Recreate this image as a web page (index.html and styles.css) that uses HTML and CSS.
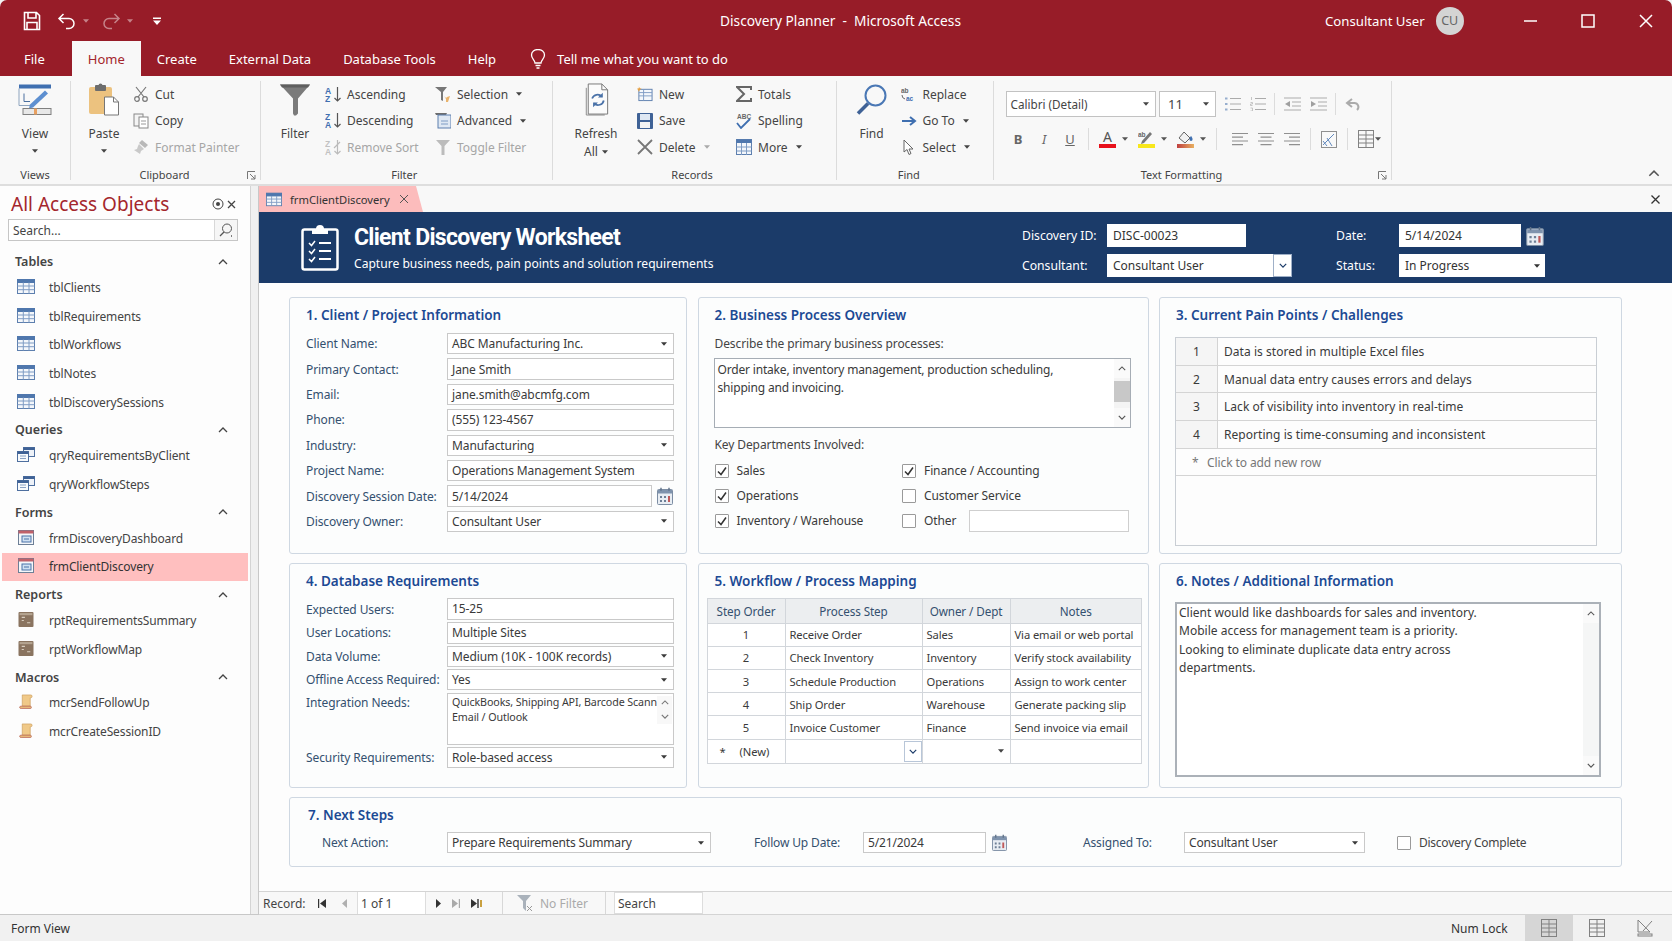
FILE: index.html
```html
<!DOCTYPE html>
<html lang="en">

<head>
	<meta charset="UTF-8">
	<title>Discovery Planner - Microsoft Access</title>
	<meta name="viewport" content="width=device-width">
	<link rel="stylesheet" href="styles.css">
</head>

<body>
	<svg class="sprite" width="0" height="0">
		<symbol id="i-table" viewBox="0 0 18 15">
			<rect x=".5" y=".5" width="17" height="14" fill="#f4f7fb" stroke="#5d7fae" />
			<rect x=".5" y=".5" width="17" height="3" fill="#4f77ad" stroke="#4f77ad" />
			<path d="M6.300 3.500v11M12 3.500v11M.5 7h17M.5 10.700h17" stroke="#7f9cc4" fill="none" />
		</symbol>
		<symbol id="i-query" viewBox="0 0 18 15">
			<rect x="6.500" y=".5" width="11" height="9" fill="#eef2f8" stroke="#4e6f9f" />
			<rect x="6.500" y=".5" width="11" height="2.500" fill="#3f6296" />
			<rect x=".5" y="4.500" width="11" height="10" fill="#f8fafc" stroke="#4e6f9f" />
			<rect x=".5" y="4.500" width="11" height="2.500" fill="#3f6296" />
			<path d="M3 9h6M3 11.500h6" stroke="#8aa2c4" />
		</symbol>
		<symbol id="i-form" viewBox="0 0 16 15">
			<rect x=".5" y=".5" width="15" height="14" fill="#f5f7fa" stroke="#6d7f96" />
			<rect x=".5" y=".5" width="15" height="3" fill="#c0616a" />
			<rect x="4" y="6" width="9" height="6" fill="#cfe0f2" stroke="#4b73a8" />
			<path d="M6 9h5" stroke="#4b73a8" />
		</symbol>
		<symbol id="i-report" viewBox="0 0 14 14">
			<rect width="14" height="14" rx="1" fill="#8a7460" />
			<rect x="1" y="1" width="12" height="2" fill="#b5a491" />
			<path d="M3 5h3M3 8h2M8 10h3" stroke="#d8cdbf" />
		</symbol>
		<symbol id="i-macro" viewBox="0 0 14 16">
			<path d="M3 1h9a1.500 1.500 0 0 1 0 3h-.5v9H3z" fill="#f0c988" stroke="#c99a58" stroke-width=".7" />
			<path d="M1 13h10.500a1.200 1.200 0 0 1 0 2.500H2.500A1.300 1.300 0 0 1 1 13z" fill="#e8b878" stroke="#b0554a" stroke-width=".7" />
		</symbol>
		<symbol id="i-cal" viewBox="0 0 16 18">
			<rect x=".5" y="2.500" width="15" height="15" rx="1" fill="#e8edf3" stroke="#7c8da3" />
			<rect x="1" y="3" width="14" height="3.500" fill="#7f93ad" />
			<path d="M4 .8v3M12 .8v3" stroke="#5f7188" stroke-width="1.400" />
			<path d="M3 9h2v2H3zM7 9h2v2H7zM3 13h2v2H3zM7 13h2v2H7z" fill="#6d7f96" />
			<path d="M11 9h2v6h-2z" fill="#c05a5a" />
		</symbol>
		<symbol id="i-caret" viewBox="0 0 7 4">
			<path d="M0 0h7L3.500 4z" fill="currentColor" />
		</symbol>
		<symbol id="i-chev-up" viewBox="0 0 10 6">
			<path d="M1 5l4-4 4 4" fill="none" stroke="currentColor" stroke-width="1.300" />
		</symbol>
		<symbol id="i-chev-down" viewBox="0 0 10 6">
			<path d="M1 1l4 4 4-4" fill="none" stroke="currentColor" stroke-width="1.500" />
		</symbol>
		<symbol id="i-check" viewBox="0 0 12 12">
			<path d="M2 6.500l3 3 5-7" fill="none" stroke="#333" stroke-width="1.500" />
		</symbol>
		<symbol id="i-bullets" viewBox="0 0 16 14">
			<path d="M5 1.500h11M5 7h11M5 12.500h11" stroke="#999" stroke-width="1.200" />
			<path d="M0 .5h2.500v2H0zM0 6h2.500v2H0zM0 11.500h2.500v2H0z" fill="#7f9cc4" />
		</symbol>
		<symbol id="i-numbers" viewBox="0 0 16 14">
			<path d="M5 1.500h11M5 7h11M5 12.500h11" stroke="#999" stroke-width="1.200" />
			<path d="M1.500 0v3M.5 5.500h2v1.500h-2v1.500h2M.5 11h2v3h-2" fill="none" stroke="#aaa" stroke-width=".8" />
		</symbol>
		<symbol id="i-outdent" viewBox="0 0 17 14">
			<path d="M0 1h17M8 5h9M8 9h9M0 13h17" stroke="#999" stroke-width="1.200" />
			<path d="M6 4v6L1 7z" fill="#8a8a8a" />
		</symbol>
		<symbol id="i-indent" viewBox="0 0 17 14">
			<path d="M0 1h17M8 5h9M8 9h9M0 13h17" stroke="#999" stroke-width="1.200" />
			<path d="M1 4v6l5-3z" fill="#8a8a8a" />
		</symbol>
		<symbol id="i-al" viewBox="0 0 16 14">
			<path d="M0 1.500h16M0 5.200h11M0 9h16M0 12.700h11" stroke="#777" stroke-width="1.200" />
		</symbol>
		<symbol id="i-ac" viewBox="0 0 16 14">
			<path d="M0 1.500h16M2.500 5.200h11M0 9h16M2.500 12.700h11" stroke="#777" stroke-width="1.200" />
		</symbol>
		<symbol id="i-ar" viewBox="0 0 16 14">
			<path d="M0 1.500h16M5 5.200h11M0 9h16M5 12.700h11" stroke="#777" stroke-width="1.200" />
		</symbol>
		<symbol id="i-grid" viewBox="0 0 16 18">
			<rect x=".5" y=".5" width="15" height="17" fill="none" stroke="#666" />
			<path d="M.5 5h15M.5 9h15M.5 13h15M8 .5v17" stroke="#666" />
		</symbol>
	</svg>

	<div class="app">
		<header class="titlebar">
			<div class="qat">
				<svg class="qat-save" width="20" height="20" viewBox="0 0 20 20">
					<path d="M2.500 1.500h12l3 3v14h-15z M6 1.500v5.500h8V1.500 M5 18.500v-7h10v7" fill="none" stroke="#fff" stroke-width="1.600" />
				</svg>
				<svg class="qat-undo" width="20" height="18" viewBox="0 0 20 18">
					<path d="M6.500 2L2 6.500 6.500 11M2.500 6.500H12a5 5 0 0 1 0 10H9" fill="none" stroke="#fff" stroke-width="1.500" />
				</svg>
				<svg class="qat-caret dim" width="6" height="4"><use href="#i-caret" /></svg>
				<svg class="qat-redo dim" width="20" height="18" viewBox="0 0 20 18">
					<path d="M13.500 2L18 6.500 13.500 11M17.500 6.500H8a5 5 0 0 0 0 10h3" fill="none" stroke="#fff" stroke-width="1.500" />
				</svg>
				<svg class="qat-caret dim" width="6" height="4"><use href="#i-caret" /></svg>
				<svg class="qat-more" width="8" height="8" viewBox="0 0 8 8">
					<path d="M0 .5h8v1.500H0zM0 3.500h8L4 8z" fill="#fff" />
				</svg>
			</div>
			<div class="doc-title">Discovery Planner&nbsp; - &nbsp;Microsoft Access</div>
			<div class="account">
				<span>Consultant User</span>
				<span class="avatar">CU</span>
				<svg class="win-btn win-min" width="14" height="14" viewBox="0 0 14 14"><path d="M0 7h13" stroke="#fff" stroke-width="1.500" /></svg>
				<svg class="win-btn win-max" width="14" height="14" viewBox="0 0 14 14"><rect x="1" y="1" width="12" height="12" fill="none" stroke="#fff" stroke-width="1.500" /></svg>
				<svg class="win-btn win-close" width="14" height="14" viewBox="0 0 14 14"><path d="M1 1l12 12M13 1L1 13" stroke="#fff" stroke-width="1.500" /></svg>
			</div>
		</header>

		<nav class="tabs">
			<span class="tab tab-file">File</span>
			<span class="tab active">Home</span>
			<span class="tab">Create</span>
			<span class="tab">External Data</span>
			<span class="tab">Database Tools</span>
			<span class="tab">Help</span>
			<svg class="bulb" width="16" height="20" viewBox="0 0 16 20">
				<path d="M5 14c0-3-3.500-4-3.500-8a6.500 5.500 0 0 1 13 0c0 4-3.500 5-3.500 8zM5.500 16.500h5M6.500 19h3" fill="none" stroke="#fff" stroke-width="1.300" />
			</svg>
			<span class="tell">Tell me what you want to do</span>
		</nav>

		<section class="ribbon">
			<div class="group g-views">
				<div class="group-body">
					<div class="big big-view">
						<svg width="34" height="32" viewBox="0 0 34 32">
							<rect x="1" y="1" width="32" height="4" fill="#3f6fb0" />
							<path d="M1 5v17h12" fill="none" stroke="#8fa5bf" />
							<path d="M6 10v8h6" fill="none" stroke="#4a6f9f" />
							<path d="M12 21L27 7l3 3-15 14-4 1z" fill="#5d8fd0" />
							<rect x="5" y="25" width="28" height="6" fill="#e8e8e8" stroke="#808080" />
							<rect x="16" y="25" width="3" height="6" fill="#e8a060" />
						</svg>
						<span>View</span>
						<svg class="caret" width="6" height="4"><use href="#i-caret" /></svg>
					</div>
				</div>
				<div class="group-label">Views</div>
			</div>

			<div class="group g-clip">
				<div class="group-body">
					<div class="big big-paste">
						<svg width="32" height="33" viewBox="0 0 32 33">
							<rect x="1" y="4" width="23" height="27" rx="2" fill="#ecc27f" />
							<rect x="7" y="2" width="11" height="6" rx="1" fill="#6d6d6d" />
							<circle cx="12.500" cy="2.500" r="2" fill="#6d6d6d" />
							<path d="M16.500 14h9l5 5v13h-14z" fill="#fff" stroke="#777" />
							<path d="M25.500 14v5h5" fill="none" stroke="#777" />
						</svg>
						<span>Paste</span>
						<svg class="caret" width="6" height="4"><use href="#i-caret" /></svg>
					</div>
					<div class="small-col col-clip">
						<div class="small">
							<svg class="ic" width="16" height="16" viewBox="0 0 16 16"><path d="M3 1l8 10M13 1L5 11" stroke="#777" stroke-width="1.200" /><circle cx="4" cy="13" r="2.300" fill="none" stroke="#777" stroke-width="1.200" /><circle cx="12" cy="13" r="2.300" fill="none" stroke="#777" stroke-width="1.200" /></svg>
							<span>Cut</span>
						</div>
						<div class="small">
							<svg class="ic" width="16" height="16" viewBox="0 0 16 16"><rect x="1" y="1" width="9" height="12" fill="#f4f4f4" stroke="#888" /><rect x="6" y="4" width="9" height="11" fill="#fff" stroke="#888" /><path d="M8 8h5M8 11h5" stroke="#999" /></svg>
							<span>Copy</span>
						</div>
						<div class="small off">
							<svg class="ic" width="16" height="16" viewBox="0 0 16 16"><path d="M9 1l6 5-3 3-6-5z" fill="#b8b8b8" /><path d="M6 5l5 5-3 2-1 3-6-4 3-1 1-3z" fill="#c9c9c9" /></svg>
							<span>Format Painter</span>
						</div>
					</div>
				</div>
				<div class="group-label">Clipboard</div>
				<svg class="launcher" width="9" height="9" viewBox="0 0 9 9"><path d="M.5 8V.5H8M3 3l5 5M8 4v4H4" fill="none" stroke="#777" /></svg>
			</div>

			<div class="group g-filter">
				<div class="group-body">
					<div class="big big-filter">
						<svg width="30" height="32" viewBox="0 0 30 32"><path d="M0 1h30L18 15v15l-2 2h-2l-1-2V15z" fill="#7b7b7b" /><path d="M0 1h30l-2 3H2z" fill="#5e5e5e" /></svg>
						<span>Filter</span>
					</div>
					<div class="small-col col-filter1">
						<div class="small">
							<svg class="ic" width="16" height="17" viewBox="0 0 16 17"><text x="0" y="7.500" class="az az-b">A</text><text x="0" y="16" class="az az-b">Z</text><path d="M12.500 1v14M9.500 12l3 3 3-3" fill="none" stroke="#555" stroke-width="1.200" /></svg>
							<span>Ascending</span>
						</div>
						<div class="small">
							<svg class="ic" width="16" height="17" viewBox="0 0 16 17"><text x="0" y="7.500" class="az az-b">Z</text><text x="0" y="16" class="az az-b">A</text><path d="M12.500 1v14M9.500 12l3 3 3-3" fill="none" stroke="#555" stroke-width="1.200" /></svg>
							<span>Descending</span>
						</div>
						<div class="small off">
							<svg class="ic" width="16" height="17" viewBox="0 0 16 17"><text x="0" y="7.500" class="az az-g">Z</text><text x="0" y="16" class="az az-g">A</text><path d="M12.500 1v14M9.500 12l3 3 3-3M9 9l6-6" fill="none" stroke="#bbb" stroke-width="1.200" /></svg>
							<span>Remove Sort</span>
						</div>
					</div>
					<div class="small-col">
						<div class="small">
							<svg class="ic" width="16" height="17" viewBox="0 0 16 17"><path d="M0 1h12L8 6v9l-2-1V6z" fill="#777" /><path d="M9 10l2 2 1-1 3-1-1 3-1 3h-2v-3z" fill="#e9b36c" /></svg>
							<span>Selection</span>
							<svg class="caret-s" width="6" height="4"><use href="#i-caret" /></svg>
						</div>
						<div class="small">
							<svg class="ic" width="16" height="17" viewBox="0 0 16 17"><path d="M0 1h12l-1 2H1z" fill="#6d6d6d" /><rect x="3" y="3" width="13" height="13" fill="#dfe8f3" stroke="#5d7fae" /><path d="M6 9h7M6 12h7" stroke="#7f9cc4" /></svg>
							<span>Advanced</span>
							<svg class="caret-s" width="6" height="4"><use href="#i-caret" /></svg>
						</div>
						<div class="small off">
							<svg class="ic" width="16" height="17" viewBox="0 0 16 17"><path d="M1 1h14L9.500 7v9h-3V7z" fill="#bcbcbc" /></svg>
							<span>Toggle Filter</span>
						</div>
					</div>
				</div>
				<div class="group-label">Filter</div>
			</div>

			<div class="group g-records">
				<div class="group-body">
					<div class="big big-refresh">
						<svg width="26" height="34" viewBox="0 0 26 34">
							<path d="M3 5v28h19" fill="none" stroke="#8a8a8a" />
							<path d="M5 1h14l6 6v25H5z" fill="#fbfbfb" stroke="#777" />
							<path d="M19 1v6h6" fill="none" stroke="#777" />
							<path d="M9 16a6 6 0 0 1 10-2M21 18a6 6 0 0 1-10 3" fill="none" stroke="#4a72a8" stroke-width="1.800" />
							<path d="M20 10v5h-5zM10 25v-5h5z" fill="#4a72a8" />
						</svg>
						<span>Refresh</span>
						<span class="all">All <svg class="caret-s" width="6" height="4"><use href="#i-caret" /></svg></span>
					</div>
					<div class="small-col col-rec1">
						<div class="small">
							<svg class="ic" width="17" height="16" viewBox="0 0 17 16"><rect x="2" y="3" width="14" height="12" fill="#f4f7fb" stroke="#5d7fae" /><path d="M2 6.500h14M2 10h14M7 3v12" stroke="#7f9cc4" /><path d="M2 0l1 2 2 .5-2 1-1 2-1-2-1-1 2-.5z" fill="#e8a040" /></svg>
							<span>New</span>
						</div>
						<div class="small">
							<svg class="ic" width="16" height="16" viewBox="0 0 16 16"><rect x="0" y="0" width="16" height="16" rx="1" fill="#3f6296" /><rect x="3" y="1" width="10" height="6" fill="#dfe8f3" /><rect x="3" y="9" width="10" height="6" fill="#f4f4f4" /></svg>
							<span>Save</span>
						</div>
						<div class="small">
							<svg class="ic" width="16" height="16" viewBox="0 0 16 16"><path d="M1 1l14 14M15 1L1 15" stroke="#777" stroke-width="1.800" /></svg>
							<span>Delete</span>
							<svg class="caret-s caret-dim" width="6" height="4"><use href="#i-caret" /></svg>
						</div>
					</div>
					<div class="small-col">
						<div class="small">
							<svg class="ic" width="16" height="16" viewBox="0 0 16 16"><path d="M15 4V1H1l7 7-7 7h14v-3" fill="none" stroke="#666" stroke-width="2" /></svg>
							<span>Totals</span>
						</div>
						<div class="small">
							<svg class="ic" width="16" height="16" viewBox="0 0 16 16"><text x="1" y="6" class="az az-s">ABC</text><path d="M1 10l4 5 9-9" fill="none" stroke="#3f6fb0" stroke-width="1.800" /></svg>
							<span>Spelling</span>
						</div>
						<div class="small">
							<svg class="ic" width="16" height="16" viewBox="0 0 16 16"><rect x=".5" y=".5" width="15" height="15" fill="#f4f7fb" stroke="#5d7fae" /><rect x=".5" y=".5" width="15" height="3.500" fill="#4f77ad" /><path d="M.5 8h15M.5 12h15M5.500 4v12M10.500 4v12" stroke="#7f9cc4" /></svg>
							<span>More</span>
							<svg class="caret-s" width="6" height="4"><use href="#i-caret" /></svg>
						</div>
					</div>
				</div>
				<div class="group-label">Records</div>
			</div>

			<div class="group g-find">
				<div class="group-body">
					<div class="big big-find">
						<svg width="32" height="32" viewBox="0 0 32 32"><circle cx="19.500" cy="12" r="10" fill="none" stroke="#4a78b5" stroke-width="2" /><path d="M12 20L2 30" stroke="#3f6296" stroke-width="3.500" /></svg>
						<span>Find</span>
					</div>
					<div class="small-col col-find">
						<div class="small">
							<svg class="ic" width="16" height="16" viewBox="0 0 16 16"><text x="0" y="7" class="az az-s">ab</text><text x="5" y="15" class="az az-s az-blue">ac</text><path d="M1 9a4 4 0 0 0 3 4" fill="none" stroke="#666" /></svg>
							<span>Replace</span>
						</div>
						<div class="small">
							<svg class="ic" width="16" height="16" viewBox="0 0 16 16"><path d="M1 8h12M9 4l5 4-5 4" fill="none" stroke="#3f6fb0" stroke-width="2" /></svg>
							<span>Go To</span>
							<svg class="caret-s" width="6" height="4"><use href="#i-caret" /></svg>
						</div>
						<div class="small">
							<svg class="ic" width="16" height="17" viewBox="0 0 16 17"><path d="M3 1v12l3-2.500 2 5 2-1-2-4.500h4z" fill="#fff" stroke="#666" /></svg>
							<span>Select</span>
							<svg class="caret-s" width="6" height="4"><use href="#i-caret" /></svg>
						</div>
					</div>
				</div>
				<div class="group-label">Find</div>
			</div>

			<div class="group g-text">
				<div class="group-body text-body">
					<div class="text-row text-row1">
						<div class="combo combo-font"><span>Calibri (Detail)</span><svg width="6" height="4"><use href="#i-caret" /></svg></div>
						<div class="combo combo-size"><span>11</span><svg width="6" height="4"><use href="#i-caret" /></svg></div>
						<svg class="tool first" width="16" height="14"><use href="#i-bullets" /></svg>
						<svg class="tool" width="16" height="14"><use href="#i-numbers" /></svg>
						<i class="tool-sep"></i>
						<svg class="tool" width="17" height="14"><use href="#i-outdent" /></svg>
						<svg class="tool" width="17" height="14"><use href="#i-indent" /></svg>
						<i class="tool-sep"></i>
						<svg class="tool" width="16" height="16" viewBox="0 0 16 16"><path d="M7 3L2 7l5 4M3 7h6a4 4 0 0 1 3 7" fill="none" stroke="#999" stroke-width="2" /></svg>
					</div>
					<div class="text-row text-row2">
						<b class="fmt fmt-b">B</b>
						<i class="fmt fmt-i">I</i>
						<u class="fmt fmt-u">U</u>
						<i class="tool-sep"></i>
						<span class="swatch"><span class="swatch-a">A</span><i class="bar bar-red"></i></span>
						<svg class="caret-t" width="6" height="4"><use href="#i-caret" /></svg>
						<span class="swatch">
							<svg width="17" height="13" viewBox="0 0 17 13"><path d="M4 10L12 1l2 2-8 9-3 1z" fill="#777" /><text x="0" y="6" class="az az-s">ab</text></svg>
							<i class="bar bar-yellow"></i>
						</span>
						<svg class="caret-t" width="6" height="4"><use href="#i-caret" /></svg>
						<span class="swatch">
							<svg width="17" height="13" viewBox="0 0 17 13"><path d="M7 1l6 6-5 5-6-5z" fill="#f2f2f2" stroke="#666" /><path d="M14 5c2 2 2 5 0 5s-2-3 0-5z" fill="#3f6fb0" /></svg>
							<i class="bar bar-fill"></i>
						</span>
						<svg class="caret-t" width="6" height="4"><use href="#i-caret" /></svg>
						<i class="tool-sep sep-align"></i>
						<svg class="tool" width="16" height="14"><use href="#i-al" /></svg>
						<svg class="tool" width="16" height="14"><use href="#i-ac" /></svg>
						<svg class="tool" width="16" height="14"><use href="#i-ar" /></svg>
						<i class="tool-sep"></i>
						<svg class="tool" width="16" height="17" viewBox="0 0 16 17"><rect x=".5" y=".5" width="15" height="16" fill="#fafafa" stroke="#777" /><path d="M2 14L13 3M2 10l4 5M6 7l5 8" stroke="#3f6fb0" fill="none" /></svg>
						<i class="tool-sep"></i>
						<svg class="tool" width="16" height="18"><use href="#i-grid" /></svg>
						<svg class="caret-g" width="6" height="4"><use href="#i-caret" /></svg>
					</div>
				</div>
				<div class="group-label">Text Formatting</div>
				<svg class="launcher" width="9" height="9" viewBox="0 0 9 9"><path d="M.5 8V.5H8M3 3l5 5M8 4v4H4" fill="none" stroke="#777" /></svg>
			</div>
			<svg class="collapse" width="12" height="7"><use href="#i-chev-up" /></svg>
		</section>

		<div class="workspace">
			<aside class="navpane">
				<div class="nav-head">
					<span class="nav-title">All Access Objects</span>
					<svg class="nav-pin" width="12" height="12" viewBox="0 0 12 12"><circle cx="6" cy="6" r="5" fill="none" stroke="#444" /><circle cx="6" cy="6" r="2" fill="#444" /></svg>
					<svg class="nav-x" width="9" height="9" viewBox="0 0 9 9"><path d="M1 1l7 7M8 1L1 8" stroke="#444" stroke-width="1.300" /></svg>
				</div>
				<div class="nav-search">
					<span>Search...</span>
					<div class="nav-search-btn">
						<svg width="14" height="14" viewBox="0 0 14 14"><circle cx="8" cy="5.500" r="4.500" fill="none" stroke="#555" /><path d="M5 9l-4 4M12 13h1" stroke="#555" stroke-width="1.300" /></svg>
					</div>
				</div>

				<div class="nav-section">Tables<svg width="10" height="6"><use href="#i-chev-up" /></svg></div>
				<div class="nav-item"><svg width="18" height="15"><use href="#i-table" /></svg>tblClients</div>
				<div class="nav-item"><svg width="18" height="15"><use href="#i-table" /></svg>tblRequirements</div>
				<div class="nav-item"><svg width="18" height="15"><use href="#i-table" /></svg>tblWorkflows</div>
				<div class="nav-item"><svg width="18" height="15"><use href="#i-table" /></svg>tblNotes</div>
				<div class="nav-item"><svg width="18" height="15"><use href="#i-table" /></svg>tblDiscoverySessions</div>

				<div class="nav-section">Queries<svg width="10" height="6"><use href="#i-chev-up" /></svg></div>
				<div class="nav-item"><svg width="18" height="15"><use href="#i-query" /></svg>qryRequirementsByClient</div>
				<div class="nav-item"><svg width="18" height="15"><use href="#i-query" /></svg>qryWorkflowSteps</div>

				<div class="nav-section">Forms<svg width="10" height="6"><use href="#i-chev-up" /></svg></div>
				<div class="nav-item"><svg width="18" height="15"><use href="#i-form" /></svg>frmDiscoveryDashboard</div>
				<div class="nav-item selected"><svg width="18" height="15"><use href="#i-form" /></svg>frmClientDiscovery</div>

				<div class="nav-section">Reports<svg width="10" height="6"><use href="#i-chev-up" /></svg></div>
				<div class="nav-item"><svg width="18" height="15"><use href="#i-report" /></svg>rptRequirementsSummary</div>
				<div class="nav-item"><svg width="18" height="15"><use href="#i-report" /></svg>rptWorkflowMap</div>

				<div class="nav-section">Macros<svg width="10" height="6"><use href="#i-chev-up" /></svg></div>
				<div class="nav-item"><svg width="18" height="15"><use href="#i-macro" /></svg>mcrSendFollowUp</div>
				<div class="nav-item"><svg width="18" height="15"><use href="#i-macro" /></svg>mcrCreateSessionID</div>
			</aside>

			<main class="docarea">
				<div class="doctabs">
					<div class="doctab">
						<svg width="16" height="15"><use href="#i-table" /></svg>
						<span>frmClientDiscovery</span>
						<svg class="doctab-x" width="10" height="10" viewBox="0 0 10 10"><path d="M1 1l8 8M9 1L1 9" stroke="#555" /></svg>
					</div>
					<svg class="doc-close" width="9" height="9" viewBox="0 0 9 9"><path d="M.5.5l8 8M8.500.5l-8 8" stroke="#333" stroke-width="1.300" /></svg>
				</div>

				<div class="form-head">
					<svg class="form-icon" width="38" height="47" viewBox="0 0 38 47">
						<rect x="1.500" y="5.500" width="35" height="40" rx="2" fill="none" stroke="#fff" stroke-width="2.500" />
						<path d="M11 5h4a4 4 0 0 1 8 0h4v5H11z" fill="#fff" />
						<path d="M8 19l2.500 2.500L14 17M8 27l2.500 2.500L14 25M8 35l2.500 2.500L14 33" fill="none" stroke="#fff" stroke-width="1.500" />
						<path d="M18 19h12M18 27h12M18 35h12" stroke="#fff" stroke-width="1.800" />
					</svg>
					<div class="form-titles">
						<h1>Client Discovery Worksheet</h1>
						<p>Capture business needs, pain points and solution requirements</p>
					</div>
					<div class="form-meta">
						<label class="meta-l1">Discovery ID:</label>
						<div class="meta-field meta-id">DISC-00023</div>
						<label class="meta-l2">Date:</label>
						<div class="meta-date"><div class="meta-field meta-dt">5/14/2024</div><svg width="18" height="20"><use href="#i-cal" /></svg></div>
						<label class="meta-l1">Consultant:</label>
						<div class="meta-field meta-cons"><span>Consultant User</span><span class="meta-btn"><svg width="8" height="5"><use href="#i-chev-down" /></svg></span></div>
						<label class="meta-l2">Status:</label>
						<div class="meta-field meta-status"><span>In Progress</span><svg width="6" height="4"><use href="#i-caret" /></svg></div>
					</div>
				</div>

				<div class="form-body">
					<div class="panels">
						<section class="panel p1">
							<h2>1. Client / Project Information</h2>
							<div class="fields">
								<label>Client Name:</label><div class="field drop"><span>ABC Manufacturing Inc.</span><svg width="6" height="4"><use href="#i-caret" /></svg></div>
								<label>Primary Contact:</label><div class="field">Jane Smith</div>
								<label>Email:</label><div class="field">jane.smith@abcmfg.com</div>
								<label>Phone:</label><div class="field">(555) 123-4567</div>
								<label>Industry:</label><div class="field drop"><span>Manufacturing</span><svg width="6" height="4"><use href="#i-caret" /></svg></div>
								<label>Project Name:</label><div class="field">Operations Management System</div>
								<label>Discovery Session Date:</label><div class="date-wrap"><div class="field">5/14/2024</div><svg width="16" height="18"><use href="#i-cal" /></svg></div>
								<label>Discovery Owner:</label><div class="field drop"><span>Consultant User</span><svg width="6" height="4"><use href="#i-caret" /></svg></div>
							</div>
						</section>

						<section class="panel p2">
							<h2>2. Business Process Overview</h2>
							<div class="plain-label first-label">Describe the primary business processes:</div>
							<div class="memo memo-proc">
								<div class="memo-text">Order intake, inventory management, production scheduling,<br>shipping and invoicing.</div>
								<div class="scroll">
									<span class="scroll-btn"><svg width="8" height="5"><use href="#i-chev-up" /></svg></span>
									<span class="scroll-thumb"></span>
									<span class="scroll-btn end"><svg width="8" height="5"><use href="#i-chev-down" /></svg></span>
								</div>
							</div>
							<div class="plain-label depts-label">Key Departments Involved:</div>
							<div class="checks">
								<div class="check-item"><span class="box"><svg width="12" height="12"><use href="#i-check" /></svg></span>Sales</div>
								<div class="check-item"><span class="box"><svg width="12" height="12"><use href="#i-check" /></svg></span>Finance / Accounting</div>
								<div class="check-item"><span class="box"><svg width="12" height="12"><use href="#i-check" /></svg></span>Operations</div>
								<div class="check-item"><span class="box"></span>Customer Service</div>
								<div class="check-item"><span class="box"><svg width="12" height="12"><use href="#i-check" /></svg></span>Inventory / Warehouse</div>
								<div class="check-item"><span class="box"></span>Other<span class="other-input"></span></div>
							</div>
						</section>

						<section class="panel p3">
							<h2>3. Current Pain Points / Challenges</h2>
							<div class="pain">
								<div class="pain-row"><span class="pain-n">1</span><span class="pain-t">Data is stored in multiple Excel files</span></div>
								<div class="pain-row"><span class="pain-n">2</span><span class="pain-t">Manual data entry causes errors and delays</span></div>
								<div class="pain-row"><span class="pain-n">3</span><span class="pain-t">Lack of visibility into inventory in real-time</span></div>
								<div class="pain-row"><span class="pain-n">4</span><span class="pain-t">Reporting is time-consuming and inconsistent</span></div>
								<div class="pain-row pain-new"><span class="star">*</span><span>Click to add new row</span></div>
							</div>
						</section>

						<section class="panel p4">
							<h2>4. Database Requirements</h2>
							<div class="fields-db">
								<label>Expected Users:</label><div class="field">15-25</div>
								<label>User Locations:</label><div class="field">Multiple Sites</div>
								<label>Data Volume:</label><div class="field drop"><span>Medium (10K - 100K records)</span><svg width="6" height="4"><use href="#i-caret" /></svg></div>
								<label>Offline Access Required:</label><div class="field drop"><span>Yes</span><svg width="6" height="4"><use href="#i-caret" /></svg></div>
								<label class="top-label">Integration Needs:</label>
								<div class="field integ">
									<div class="integ-text">QuickBooks, Shipping API, Barcode Scann<br>Email / Outlook</div>
									<div class="integ-scroll">
										<span><svg width="8" height="5"><use href="#i-chev-up" /></svg></span>
										<span><svg width="8" height="5"><use href="#i-chev-down" /></svg></span>
									</div>
								</div>
								<label>Security Requirements:</label><div class="field drop"><span>Role-based access</span><svg width="6" height="4"><use href="#i-caret" /></svg></div>
							</div>
						</section>

						<section class="panel p5">
							<h2>5. Workflow / Process Mapping</h2>
							<table class="flow">
								<colgroup><col class="c1"><col class="c2"><col class="c3"><col></colgroup>
								<thead>
									<tr><th>Step Order</th><th>Process Step</th><th>Owner / Dept</th><th>Notes</th></tr>
								</thead>
								<tbody>
									<tr><td class="num">1</td><td>Receive Order</td><td>Sales</td><td>Via email or web portal</td></tr>
									<tr><td class="num">2</td><td>Check Inventory</td><td>Inventory</td><td>Verify stock availability</td></tr>
									<tr><td class="num">3</td><td>Schedule Production</td><td>Operations</td><td>Assign to work center</td></tr>
									<tr><td class="num">4</td><td>Ship Order</td><td>Warehouse</td><td>Generate packing slip</td></tr>
									<tr><td class="num">5</td><td>Invoice Customer</td><td>Finance</td><td>Send invoice via email</td></tr>
									<tr class="new-row">
										<td><span class="new-cell"><span>*</span><span>(New)</span></span></td>
										<td><span class="cell-drop boxed"><svg width="8" height="5"><use href="#i-chev-down" /></svg></span></td>
										<td><span class="cell-drop"><svg width="6" height="4"><use href="#i-caret" /></svg></span></td>
										<td></td>
									</tr>
								</tbody>
							</table>
						</section>

						<section class="panel p6">
							<h2>6. Notes / Additional Information</h2>
							<div class="memo memo-notes">
								<div class="memo-text">Client would like dashboards for sales and inventory.<br>Mobile access for management team is a priority.<br>Looking to eliminate duplicate data entry across<br>departments.</div>
								<div class="scroll scroll-plain">
									<span class="scroll-btn"><svg width="8" height="5"><use href="#i-chev-up" /></svg></span>
									<span class="scroll-btn end"><svg width="8" height="5"><use href="#i-chev-down" /></svg></span>
								</div>
							</div>
						</section>

						<section class="panel p7">
							<h2>7. Next Steps</h2>
							<div class="next-row">
								<label class="lbl-action">Next Action:</label>
								<div class="field drop fld-action"><span>Prepare Requirements Summary</span><svg width="6" height="4"><use href="#i-caret" /></svg></div>
								<label class="lbl-follow">Follow Up Date:</label>
								<div class="field fld-follow">5/21/2024</div>
								<svg class="cal-follow" width="15" height="17"><use href="#i-cal" /></svg>
								<label class="lbl-assigned">Assigned To:</label>
								<div class="field drop fld-assigned"><span>Consultant User</span><svg width="6" height="4"><use href="#i-caret" /></svg></div>
								<span class="box box-done"></span>
								<span class="done-label">Discovery Complete</span>
							</div>
						</section>
					</div>
				</div>

				<div class="recordbar">
					<span class="rec-label">Record:</span>
					<svg class="rec-first" width="8" height="9" viewBox="0 0 8 9"><path d="M.5 0v9" stroke="#333" stroke-width="1.400" /><path d="M8 0v9L2 4.500z" fill="#333" /></svg>
					<svg class="rec-prev" width="5" height="9" viewBox="0 0 5 9"><path d="M5 0v9L0 4.500z" fill="#b0b0b0" /></svg>
					<div class="rec-box">1 of 1</div>
					<svg class="rec-next" width="5" height="9" viewBox="0 0 5 9"><path d="M0 0v9l5-4.500z" fill="#333" /></svg>
					<svg class="rec-last" width="8" height="9" viewBox="0 0 8 9"><path d="M0 0v9l6-4.500z" fill="#aaa" /><path d="M7.500 0v9" stroke="#aaa" stroke-width="1.400" /></svg>
					<svg class="rec-new" width="12" height="9" viewBox="0 0 12 9"><path d="M0 0v9l6-4.500z" fill="#333" /><path d="M7 0v9" stroke="#333" stroke-width="1.400" /><path d="M10 1v7" stroke="#c9a040" stroke-width="2" /></svg>
					<i class="rec-sep sep-a"></i>
					<svg class="rec-funnel" width="16" height="17" viewBox="0 0 16 17"><path d="M0 0h14L9 6v10l-3-3V6z" fill="#aab2bb" /><path d="M10 11l5 5M15 11l-5 5" stroke="#999" /></svg>
					<span class="rec-filter">No Filter</span>
					<i class="rec-sep"></i>
					<div class="rec-search">Search</div>
				</div>
			</main>
		</div>

		<footer class="statusbar">
			<span class="status-left">Form View</span>
			<span class="status-lock">Num Lock</span>
			<span class="view-btn on"><svg width="16" height="18"><use href="#i-grid" /></svg></span>
			<span class="view-btn"><svg width="16" height="18"><use href="#i-grid" /></svg></span>
			<span class="view-btn">
				<svg width="16" height="18" viewBox="0 0 16 18"><path d="M1 1v12h12zM15 2L6 12" fill="none" stroke="#666" /><rect x="1" y="15" width="14" height="2" fill="none" stroke="#666" /></svg>
			</span>
		</footer>
	</div>
</body>

</html>
```
FILE: styles.css
```css
* {
	box-sizing: border-box;
}

html,
body {
	margin: 0;
	height: 100%;
}

body {
	background: #f3f3f3;
	color: #333;
	font-family: "Noto Sans", "Open Sans", sans-serif;
	font-size: 12px;
	overflow: hidden;
}

h1,
h2,
p {
	margin: 0;
}

.sprite {
	position: absolute;
}

.app {
	display: flex;
	flex-direction: column;
	width: 1672px;
	height: 941px;
}

/* title bar */
.titlebar {
	display: flex;
	align-items: center;
	flex: none;
	height: 41px;
	background: #971c28;
	color: #fff;
	border-radius: 7px 7px 0 0;
}

.qat {
	display: flex;
	align-items: center;
	width: 720px;
	padding-left: 22px;
}

.qat-undo {
	margin-left: 15px;
}

.qat-redo {
	margin-left: 12px;
}

.qat-caret {
	margin-left: 6px;
	color: #fff;
}

.qat-more {
	margin-left: 20px;
}

.dim {
	opacity: 0.45;
}

.doc-title {
	width: 241px;
	font-size: 13.7px;
	white-space: nowrap;
	text-align: center;
}

.account {
	display: flex;
	align-items: center;
	margin-left: 364px;
	font-size: 13.2px;
	white-space: nowrap;
}

.avatar {
	display: flex;
	align-items: center;
	justify-content: center;
	width: 28px;
	height: 28px;
	margin-left: 11px;
	border-radius: 50%;
	background: #d4d4d4;
	color: #666;
	font-size: 12.5px;
}

.win-min {
	margin-left: 60px;
}

.win-max {
	margin-left: 43px;
}

.win-close {
	margin-left: 44px;
}

/* tabs */
.tabs {
	display: flex;
	align-items: stretch;
	flex: none;
	height: 35px;
	padding-left: 24px;
	background: #971c28;
	color: #fff;
	font-size: 13px;
}

.tab {
	display: flex;
	align-items: center;
	padding: 0 16px;
}

.tab-file {
	padding: 0;
	margin-right: 27px;
}

.tab.active {
	background: #f8f8f8;
	color: #a4262c;
}

.bulb {
	align-self: center;
	margin-left: 18px;
}

.tell {
	align-self: center;
	margin-left: 11px;
	letter-spacing: -0.03px;
}

/* ribbon */
.ribbon {
	position: relative;
	display: flex;
	flex: none;
	height: 110px;
	padding-top: 5px;
	background: #f8f8f8;
	border-bottom: 2px solid #dedede;
	color: #444;
	font-size: 12px;
}

.group {
	position: relative;
	height: 99px;
	border-right: 1px solid #dcdcdc;
}

.g-views {
	width: 71px;
}

.g-clip {
	width: 190px;
}

.g-filter {
	width: 291.5px;
}

.g-records {
	width: 284px;
}

.g-find {
	width: 157.5px;
}

.g-text {
	width: 398px;
}

.group-body {
	display: flex;
	height: 84px;
}

.group-label {
	height: 15px;
	font-size: 11px;
	line-height: 20px;
	text-align: center;
}

.g-clip .group-label {
	padding-right: 2px;
}

.g-filter .group-label,
.g-records .group-label {
	padding-right: 4px;
}

.g-find .group-label {
	padding-right: 12px;
}

.g-text .group-label {
	padding-right: 22px;
}

.launcher {
	position: absolute;
	right: 4px;
	bottom: 0;
}

.collapse {
	position: absolute;
	right: 12px;
	bottom: 7px;
	color: #555;
}

.big {
	display: flex;
	flex-direction: column;
	align-items: center;
	padding-top: 2px;
	line-height: 18px;
}

.big > svg:first-child {
	flex: none;
	height: 33px;
	margin-bottom: 9px;
}

.big .caret {
	margin-top: 6px;
	color: #444;
}

.big-view {
	width: 50px;
	margin-left: 10px;
}

.big-paste {
	width: 50px;
	margin-left: 8px;
}

.big-filter {
	width: 50px;
	margin-left: 9px;
}

.big-refresh {
	width: 60px;
	margin-left: 13.5px;
}

.big-find {
	width: 44px;
	margin-left: 13px;
}

.all {
	display: flex;
	align-items: center;
	gap: 4px;
}

.all .caret-s {
	margin-left: 0;
}

.small-col {
	display: flex;
	flex-direction: column;
}

.col-clip {
	margin-left: 4px;
}

.col-filter1 {
	width: 110px;
	margin-left: 5px;
}

.col-rec1 {
	width: 99px;
	margin-left: 11px;
}

.col-find {
	margin-left: 7px;
}

.small {
	display: flex;
	align-items: center;
	height: 26.5px;
	white-space: nowrap;
}

.small .ic {
	flex: none;
	width: 16px;
	margin-right: 6px;
}

.small.off {
	color: #a6a6a6;
}

.caret-s {
	margin-left: 8px;
	color: #444;
}

.caret-dim {
	color: #aaa;
}

.az {
	font-family: "Liberation Sans", sans-serif;
	font-weight: bold;
}

.az-b {
	font-size: 8.5px;
	fill: #3f6fb0;
}

.az-g {
	font-size: 8.5px;
	fill: #c2c2c2;
}

.az-s {
	font-size: 6.5px;
	fill: #666;
}

.az-blue {
	fill: #3f6fb0;
}

/* text formatting */
.text-body {
	flex-direction: column;
	padding-top: 10px;
}

.text-row {
	display: flex;
	align-items: center;
}

.text-row1 {
	height: 26px;
	padding-left: 11.5px;
}

.text-row2 {
	height: 22px;
	margin-top: 11px;
	padding-left: 16px;
	gap: 10px;
}

.combo {
	display: flex;
	align-items: center;
	justify-content: space-between;
	flex: none;
	height: 26px;
	padding: 0 6px 0 4px;
	border: 1px solid #c2c2c2;
	background: #fff;
	color: #444;
}

.combo-font {
	width: 150px;
	font-size: 11.7px;
}

.combo-size {
	width: 56.5px;
	margin-left: 3.5px;
	padding-left: 8px;
	font-size: 13px;
}

.tool {
	flex: none;
	margin-left: 9px;
	opacity: 0.8;
}

.text-row2 .tool {
	margin-left: 0;
}

.tool-sep {
	flex: none;
	width: 1px;
	height: 22px;
	margin-left: 8px;
	background: #dcdcdc;
}

.text-row2 .tool-sep {
	margin-left: 0;
}

.text-row2 .sep-align {
	margin-right: 5px;
}

.fmt {
	width: 16px;
	color: #666;
	font-size: 13px;
	text-align: center;
}

.fmt-b {
	font-weight: bold;
}

.swatch {
	display: flex;
	flex-direction: column;
	align-items: center;
	width: 17px;
}

.swatch-a {
	color: #555;
	font-size: 14px;
	line-height: 14px;
}

.bar {
	display: block;
	width: 17px;
	height: 4px;
}

.bar-red {
	background: #e8111b;
}

.bar-yellow {
	background: #f8e71c;
}

.bar-fill {
	background: linear-gradient(90deg, #c04040, #e8b060);
}

.caret-t {
	margin-left: -4px;
	color: #555;
}

.caret-g {
	margin-left: -9px;
	color: #555;
}

/* navigation pane */
.workspace {
	display: flex;
	flex: 1;
	min-height: 0;
}

.navpane {
	flex: none;
	width: 259px;
	padding-right: 7px;
	background: #fdfdfd;
	border-right: 1px solid #c8c8c8;
	border-bottom: 1px solid #c8c8c8;
	box-shadow: inset -7px 0 0 #f0f0f0, inset -8px 0 0 #d4d4d4;
}

.nav-head {
	display: flex;
	align-items: center;
	height: 33px;
	padding: 3px 0 0 11px;
}

.nav-title {
	width: 201px;
	color: #a4262c;
	font-size: 19px;
	white-space: nowrap;
}

.nav-x {
	margin-left: 3px;
}

.nav-search {
	display: flex;
	align-items: center;
	justify-content: space-between;
	width: 230px;
	height: 22px;
	margin: 0 0 7px 8px;
	padding-left: 4px;
	border: 1px solid #c6c6c6;
	background: #fff;
	color: #444;
}

.nav-search-btn {
	display: flex;
	align-items: center;
	justify-content: center;
	width: 23px;
	height: 20px;
	border-left: 1px solid #d8d8d8;
	background: #f6f6f6;
}

.nav-section {
	display: flex;
	align-items: center;
	justify-content: space-between;
	height: 25px;
	padding: 2px 23px 0 15px;
	color: #444;
	font-size: 12.5px;
	font-weight: 600;
}

.nav-section svg {
	color: #444;
}

.nav-item {
	display: flex;
	align-items: center;
	height: 28.7px;
	margin: 0 3px 0 2px;
	padding-left: 15px;
	color: #444;
	letter-spacing: -0.13px;
	white-space: nowrap;
}

.nav-item svg {
	flex: none;
	margin-right: 14px;
	margin-top: -2px;
}

.nav-item.selected {
	background: #ffbfbf;
	color: #333;
}

/* document area */
.docarea {
	display: flex;
	flex: 1;
	flex-direction: column;
	min-width: 0;
}

.doctabs {
	display: flex;
	align-items: center;
	justify-content: space-between;
	flex: none;
	height: 26px;
	padding-right: 12px;
	background: #f8f8f8;
}

.doctab {
	display: flex;
	align-items: center;
	width: 164px;
	height: 26px;
	padding-left: 7px;
	background: #fcbcbc;
	clip-path: polygon(0 0, 157px 0, 100% 100%, 0 100%);
	color: #333;
	white-space: nowrap;
}

.doctab span {
	margin-left: 8px;
	font-size: 11.2px;
}

.doctab-x {
	margin-left: 9px;
}

.form-head {
	display: flex;
	align-items: center;
	flex: none;
	height: 71px;
	padding-left: 42px;
	background: #1b3b69;
	color: #fff;
}

.form-icon {
	flex: none;
}

.form-titles {
	width: 668px;
	margin-left: 15px;
}

.form-titles h1 {
	font-family: Roboto, "Noto Sans", sans-serif;
	font-size: 23px;
	font-weight: 700;
	letter-spacing: -0.7px;
	line-height: 28px;
	white-space: nowrap;
}

.form-titles p {
	margin-top: 3px;
	font-size: 12.1px;
	white-space: nowrap;
}

.form-meta {
	display: grid;
	grid-template-columns: 85px 229px 63px auto;
	align-items: center;
	row-gap: 7px;
	margin-top: 6px;
	color: #fff;
	font-size: 12.2px;
}

.meta-field {
	display: flex;
	align-items: center;
	justify-content: space-between;
	height: 23px;
	padding-left: 6px;
	background: #fff;
	color: #333;
	font-size: 12px;
}

.meta-id {
	width: 139px;
}

.meta-date {
	display: flex;
	align-items: center;
	gap: 5px;
}

.meta-dt {
	width: 122px;
}

.meta-cons {
	width: 185px;
}

.meta-btn {
	display: flex;
	align-items: center;
	justify-content: center;
	width: 19px;
	height: 23px;
	border: 1px solid #9fb0c8;
	background: #fff;
	color: #1b3b69;
}

.meta-status {
	width: 146px;
	padding-right: 5px;
}

.form-body {
	flex: 1;
	min-height: 0;
	padding: 14px 0 0 30px;
	background: #fdfdfd;
}

.panels {
	display: grid;
	grid-template-columns: 398px 451px 463px;
	grid-template-rows: 257px 225px 70px;
	gap: 9px 10.5px;
	color: #3a3a3a;
	letter-spacing: -0.1px;
}

.panel {
	padding: 8px 12px 0 16px;
	background: #fcfdfd;
	border: 1px solid #cfd8e2;
	border-radius: 3px;
}

.panel h2 {
	color: #1c4a94;
	font-size: 13.5px;
	font-weight: 600;
	letter-spacing: 0;
	line-height: 19px;
	white-space: nowrap;
}

.p7 {
	grid-column: 1 / 4;
	padding-left: 18px;
}

.fields {
	display: grid;
	grid-template-columns: 141px 1fr;
	align-items: center;
	row-gap: 4px;
	margin-top: 8px;
}

.fields label,
.fields-db label {
	color: #34506f;
	white-space: nowrap;
}

.field {
	display: flex;
	align-items: center;
	justify-content: space-between;
	height: 21.4px;
	padding: 0 6px 0 4px;
	border: 1px solid #c9c9c9;
	background: #fff;
	white-space: nowrap;
}

.date-wrap {
	display: flex;
	align-items: center;
	gap: 5px;
}

.date-wrap .field {
	flex: none;
	width: 205px;
}

.date-wrap svg {
	flex: none;
}

.plain-label {
	color: #444;
	line-height: 18px;
}

.first-label {
	margin-top: 10px;
}

.memo {
	display: flex;
	justify-content: space-between;
	border: 1px solid #a6adb5;
	background: #fff;
}

.memo-text {
	padding: 2px 3px;
	line-height: 18px;
	white-space: nowrap;
}

.memo-proc {
	width: 417px;
	height: 70px;
	margin: 5px 0 0 -1px;
}

.memo-proc .memo-text {
	letter-spacing: -0.18px;
}

.scroll {
	display: flex;
	flex-direction: column;
	flex: none;
	width: 16px;
	background: #f4f4f4;
}

.scroll-btn {
	display: flex;
	align-items: center;
	justify-content: center;
	flex: none;
	height: 19px;
	background: #fafafa;
	color: #555;
}

.scroll-btn.end {
	margin-top: auto;
}

.scroll-thumb {
	flex: none;
	height: 21px;
	margin-top: 3px;
	background: #c8c8c8;
}

.depts-label {
	margin-top: 8px;
}

.checks {
	display: grid;
	grid-template-columns: 187.5px 1fr;
	grid-auto-rows: 25px;
	align-items: center;
	margin-top: 4px;
}

.check-item {
	display: flex;
	align-items: center;
	white-space: nowrap;
}

.box {
	display: flex;
	align-items: center;
	justify-content: center;
	flex: none;
	width: 14px;
	height: 14px;
	margin-right: 8px;
	border: 1px solid #9a9a9a;
	border-radius: 1px;
	background: #fff;
}

.other-input {
	width: 160px;
	height: 22px;
	margin-left: auto;
	border: 1px solid #cfcfcf;
	background: #fff;
}

.check-item:last-child {
	width: 227px;
}

.pain {
	width: 422px;
	height: 209px;
	margin: 12px 0 0 -1px;
	border: 1px solid #c9ced4;
	background: #fdfdfd;
}

.pain-row {
	display: flex;
	align-items: center;
	height: 27.7px;
	border-bottom: 1px solid #d4d4d4;
}

.pain-n {
	display: flex;
	align-items: center;
	justify-content: center;
	flex: none;
	width: 42px;
	height: 100%;
	border-right: 1px solid #d4d4d4;
	background: #f5f5f5;
}

.pain-t {
	margin-left: 6px;
	letter-spacing: 0.05px;
}

.pain-new {
	color: #777;
}

.star {
	width: 31px;
	padding-left: 16px;
}

.fields-db {
	display: grid;
	grid-template-columns: 141px 1fr;
	grid-template-rows: 22px 21px 21px 21px 52px 21px;
	align-items: center;
	row-gap: 2.4px;
	margin-top: 7px;
}

.top-label {
	align-self: start;
	padding-top: 1px;
}

.integ {
	align-items: flex-start;
	height: 52px;
	padding: 1px 1px 0 4px;
}

.integ-text {
	font-size: 10.7px;
	line-height: 15.5px;
}

.integ-scroll {
	display: flex;
	flex-direction: column;
	flex: none;
	width: 15px;
	margin-top: 1px;
	color: #777;
}

.integ-scroll span {
	display: flex;
	align-items: center;
	justify-content: center;
	height: 14px;
	background: #f8f8f8;
}

.flow {
	width: 435.5px;
	margin: 7px 0 0 -8px;
	border-collapse: collapse;
	table-layout: fixed;
	font-size: 11.2px;
}

.flow .c1 {
	width: 78px;
}

.flow .c2 {
	width: 137px;
}

.flow .c3 {
	width: 88px;
}

.flow th,
.flow td {
	height: 23.2px;
	padding: 0 4px;
	border: 1px solid #d2d6db;
	background: #fff;
	white-space: nowrap;
}

.flow th {
	height: 24.6px;
	background: #eceef0;
	color: #34506f;
	font-size: 11.7px;
	font-weight: 400;
	text-align: center;
}

.flow .num {
	text-align: center;
}

.new-row td {
	height: 24.5px;
	padding: 0;
}

.new-cell {
	display: flex;
	gap: 14px;
	padding-left: 12px;
}

.cell-drop {
	display: flex;
	align-items: center;
	justify-content: center;
	width: 18px;
	height: 21px;
	margin-left: auto;
	color: #444;
}

.cell-drop.boxed {
	border: 1px solid #b8c6d8;
	color: #1b3b69;
}

.memo-notes {
	width: 426px;
	height: 174.5px;
	margin: 11px 0 0 -1px;
	border: 2px solid #abb1b8;
}

.memo-notes .memo-text {
	padding: 0 2px;
	letter-spacing: 0.02px;
	line-height: 18.3px;
}

.scroll-plain {
	background: #f5f6f6;
}

.next-row {
	display: flex;
	align-items: center;
	margin-top: 7px;
	letter-spacing: -0.15px;
	white-space: nowrap;
}

.next-row label {
	color: #34506f;
}

.lbl-action {
	width: 125px;
	margin-left: 14px;
}

.fld-action {
	flex: none;
	width: 264px;
}

.lbl-follow {
	width: 109px;
	margin-left: 43px;
}

.fld-follow {
	flex: none;
	width: 123px;
}

.cal-follow {
	margin-left: 6px;
}

.lbl-assigned {
	width: 101px;
	margin-left: 76px;
}

.fld-assigned {
	flex: none;
	width: 181px;
}

.box-done {
	margin-left: 32px;
}

.done-label {
	color: #444;
	letter-spacing: -0.25px;
}

/* record bar */
.recordbar {
	display: flex;
	align-items: center;
	flex: none;
	height: 24px;
	padding-left: 4px;
	background: #f8f8f8;
	border-top: 1px solid #d4d4d4;
	border-bottom: 1px solid #d4d4d4;
	color: #444;
}

.rec-label {
	width: 55px;
}

.rec-prev {
	margin-left: 16px;
}

.rec-box {
	display: flex;
	align-items: center;
	width: 69px;
	height: 22px;
	margin-left: 10px;
	padding-left: 3px;
	background: #fff;
	border-right: 1px solid #ddd;
	border-left: 1px solid #ddd;
}

.rec-next {
	margin-left: 10px;
}

.rec-last {
	margin-left: 11px;
}

.rec-new {
	margin-left: 11px;
}

.rec-sep {
	width: 1px;
	height: 22px;
	background: #d8d8d8;
}

.sep-a {
	margin-left: 19px;
}

.rec-funnel {
	margin-left: 14px;
}

.rec-filter {
	width: 65px;
	margin-left: 7px;
	color: #aaa;
}

.rec-search {
	display: flex;
	align-items: center;
	width: 89px;
	height: 22px;
	margin-left: 8px;
	padding-left: 3px;
	background: #fff;
	border: 1px solid #ddd;
}

/* status bar */
.statusbar {
	display: flex;
	align-items: center;
	flex: none;
	height: 26px;
	background: #f1f1f1;
	color: #333;
}

.status-left {
	width: 1451px;
	padding-left: 11px;
}

.status-lock {
	width: 74px;
}

.view-btn {
	display: flex;
	align-items: center;
	justify-content: center;
	width: 48px;
	height: 26px;
	opacity: 0.8;
}

.view-btn.on {
	background: #d0d0d0;
}
```
